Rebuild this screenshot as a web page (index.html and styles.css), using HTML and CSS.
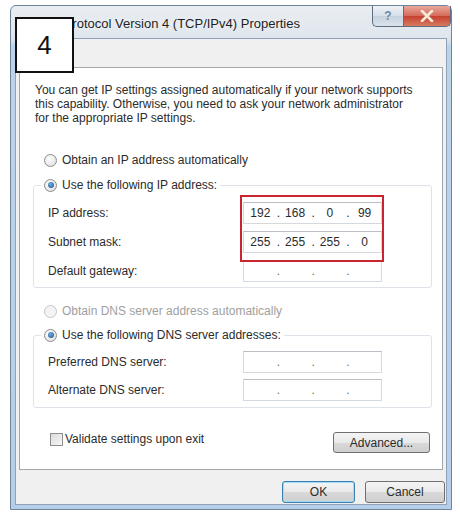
FILE: index.html
```html
<!DOCTYPE html>
<html lang="en">
<head>
    <meta charset="UTF-8">
    <meta name="viewport" content="width=device-width, initial-scale=1.0">
    <title>Internet Protocol Version 4 (TCP/IPv4) Properties</title>
    <link rel="stylesheet" href="styles.css">
</head>
<body>
    <div class="window">
        <div class="titlebar">
            <span class="title">Internet Protocol Version 4 (TCP/IPv4) Properties</span>
            <div class="caption-buttons">
                <span class="cap help">?</span>
                <span class="cap close">
                    <svg width="14" height="12" viewBox="0 0 14 12">
                        <path d="M2 1 L12 11 M12 1 L2 11" stroke="#f6ead8" stroke-width="2.6" stroke-linecap="round"/>
                    </svg>
                </span>
            </div>
        </div>

        <div class="client">
            <!-- the General tab sits under the step badge -->
            <div class="tabs"><span class="tab"></span></div>

            <div class="panel">
                <p class="intro">You can get IP settings assigned automatically if your network supports<br>this capability. Otherwise, you need to ask your network administrator<br>for the appropriate IP settings.</p>

                <div class="option">
                    <span class="radio"></span>
                    <span>Obtain an IP address automatically</span>
                </div>

                <div class="group">
                    <div class="legend">
                        <span class="radio checked"></span>
                        <span>Use the following IP address:</span>
                    </div>
                    <div class="row">
                        <span class="label">IP address:</span>
                        <div class="ipfield">
                            <span class="seg">192</span><span class="dot">.</span><span class="seg">168</span><span class="dot">.</span><span class="seg">0</span><span class="dot">.</span><span class="seg">99</span>
                        </div>
                    </div>
                    <div class="row">
                        <span class="label">Subnet mask:</span>
                        <div class="ipfield">
                            <span class="seg">255</span><span class="dot">.</span><span class="seg">255</span><span class="dot">.</span><span class="seg">255</span><span class="dot">.</span><span class="seg">0</span>
                        </div>
                    </div>
                    <div class="row">
                        <span class="label">Default gateway:</span>
                        <div class="ipfield empty">
                            <span class="seg"></span><span class="dot">.</span><span class="seg"></span><span class="dot">.</span><span class="seg"></span><span class="dot">.</span><span class="seg"></span>
                        </div>
                    </div>
                    <div class="highlight"></div>
                </div>

                <div class="option disabled">
                    <span class="radio"></span>
                    <span>Obtain DNS server address automatically</span>
                </div>

                <div class="group dns">
                    <div class="legend">
                        <span class="radio checked"></span>
                        <span>Use the following DNS server addresses:</span>
                    </div>
                    <div class="row">
                        <span class="label">Preferred DNS server:</span>
                        <div class="ipfield empty">
                            <span class="seg"></span><span class="dot">.</span><span class="seg"></span><span class="dot">.</span><span class="seg"></span><span class="dot">.</span><span class="seg"></span>
                        </div>
                    </div>
                    <div class="row">
                        <span class="label">Alternate DNS server:</span>
                        <div class="ipfield empty">
                            <span class="seg"></span><span class="dot">.</span><span class="seg"></span><span class="dot">.</span><span class="seg"></span><span class="dot">.</span><span class="seg"></span>
                        </div>
                    </div>
                </div>

                <div class="footer-row">
                    <div class="check-option">
                        <span class="checkbox"></span>
                        <span>Validate settings upon exit</span>
                    </div>
                    <button class="btn advanced">Advanced...</button>
                </div>
            </div>

            <div class="dialog-buttons">
                <button class="btn default">OK</button>
                <button class="btn cancel">Cancel</button>
            </div>
        </div>

        <div class="step">4</div>
    </div>
</body>
</html>
```

FILE: styles.css
```css
html, body {
    margin: 0;
    background: #ffffff;
}
body {
    width: 460px;
    height: 515px;
    overflow: hidden;
    font-family: 'Liberation Sans', Arial, sans-serif;
    font-size: 12px;
    color: #2b2b2b;
}
.window {
    position: relative;
    box-sizing: border-box;
    margin: 5px 0 0 10px;
    width: 442px;
    height: 505px;
    border: 1px solid #6f859c;
    border-radius: 6px 6px 0 0;
    background: linear-gradient(180deg, #e9edf1 0px, #dfe6ed 32px, #bcd3ea 40px, #b6cfe8 100%);
    padding: 0 4px 4px 4px;
}
.titlebar {
    display: flex;
    align-items: flex-start;
    height: 32px;
    margin: 0 -4px;
}
.title {
    padding: 10px 0 0 5px;
    font-size: 13px;
    color: #1f1f1f;
    text-shadow: 0 0 6px #ffffff;
}
.caption-buttons {
    display: flex;
    margin-left: auto;
}
.cap {
    display: flex;
    align-items: center;
    justify-content: center;
    box-sizing: border-box;
    height: 21px;
    border: 1px solid #5d6e80;
    border-top: none;
}
.help {
    width: 31px;
    border-right: none;
    border-radius: 0 0 0 5px;
    background: linear-gradient(180deg, #eef2f6, #d6dfe8 50%, #c5d2de 51%, #d9e3ec);
    color: #6f8aa6;
    font-size: 12px;
    font-weight: bold;
}
.close {
    width: 48px;
    border-radius: 0 0 5px 0;
    background: linear-gradient(180deg, #e9a89a, #d4695a 50%, #c5402f 51%, #d77b62);
}
.client {
    box-sizing: border-box;
    height: 467px;
    border: 1px solid #8ea3b8;
    background: #f0f0f0;
}
.tabs {
    height: 28px;
    padding-left: 3px;
    display: flex;
    align-items: flex-end;
}
.tab {
    box-sizing: border-box;
    width: 50px;
    height: 23px;
    border: 1px solid #898c95;
    border-bottom: none;
    background: #ffffff;
}
.panel {
    box-sizing: border-box;
    width: 424px;
    height: 403px;
    margin-left: 3px;
    border: 1px solid #a3a6ad;
    background: #ffffff;
}
.intro {
    margin: 15px 0 0 15px;
    line-height: 14px;
    white-space: nowrap;
}
.option {
    display: flex;
    align-items: center;
    height: 16px;
    margin: 27px 0 0 24px;
    gap: 5px;
}
.option.disabled {
    margin-top: 15px;
    color: #a0a0a0;
}
.radio {
    box-sizing: border-box;
    width: 13px;
    height: 13px;
    border-radius: 50%;
    border: 1px solid #8d8d8d;
    background: radial-gradient(circle at 40% 35%, #ffffff, #dadada);
    display: flex;
    align-items: center;
    justify-content: center;
}
.radio.checked::after {
    content: "";
    width: 6px;
    height: 6px;
    border-radius: 50%;
    background: radial-gradient(circle at 40% 35%, #6fb0e6, #1c4d7e);
}
.option.disabled .radio {
    border-color: #c6c6c6;
    background: #f4f4f4;
}
.group {
    position: relative;
    box-sizing: border-box;
    width: 399px;
    margin: 17px 0 0 13px;
    padding: 0 0 5px 14px;
    border: 1px solid #dde3e8;
    border-radius: 3px;
}
.group.dns {
    margin-top: 16px;
    padding-bottom: 6px;
}
.legend {
    display: flex;
    align-items: center;
    gap: 5px;
    width: fit-content;
    height: 16px;
    margin: -9px 0 0 -7px;
    padding: 0 3px;
    background: #ffffff;
}
.row {
    display: flex;
    align-items: center;
    margin-top: 7px;
}
.legend + .row {
    margin-top: 9px;
}
.dns .row {
    margin-top: 6px;
}
.dns .legend + .row {
    margin-top: 8px;
}
.label {
    width: 195px;
}
.ipfield {
    box-sizing: border-box;
    display: flex;
    align-items: center;
    width: 139px;
    height: 22px;
    border: 1px solid #d5d9de;
    border-top-color: #b9bec5;
    background: #ffffff;
}
.seg {
    width: 33px;
    text-align: center;
}
.dot {
    width: 2px;
    text-align: center;
}
.ipfield.empty .dot {
    color: #6d6d6d;
}
.highlight {
    position: absolute;
    left: 206px;
    top: 9px;
    box-sizing: border-box;
    width: 144px;
    height: 67px;
    border: 2px solid #c9252e;
}
.footer-row {
    display: flex;
    align-items: flex-start;
    justify-content: space-between;
    margin: 20px 12px 0 30px;
}
.check-option {
    display: flex;
    align-items: center;
    gap: 2px;
    height: 22px;
}
.checkbox {
    box-sizing: border-box;
    width: 13px;
    height: 13px;
    border: 1px solid #8f8f8f;
    background: linear-gradient(135deg, #dcdcdc, #f7f7f7);
}
.btn {
    box-sizing: border-box;
    height: 21px;
    padding: 0;
    font-family: inherit;
    font-size: 12px;
    color: #2b2b2b;
    border: 1px solid #707070;
    border-radius: 3px;
    background: linear-gradient(180deg, #f4f4f4, #e9e9e9 50%, #d9d9d9 51%, #cfcfcf);
}
.advanced {
    width: 97px;
    margin-top: 4px;
}
.dialog-buttons {
    display: flex;
    justify-content: flex-end;
    gap: 10px;
    margin-top: 11px;
    padding-right: 1px;
}
.dialog-buttons .btn {
    height: 22px;
}
.default {
    width: 73px;
    border-color: #3c7fb1;
    box-shadow: inset 0 0 0 1px #9ddcf6;
}
.cancel {
    width: 80px;
}
.step {
    position: absolute;
    left: 4px;
    top: 11px;
    box-sizing: border-box;
    width: 59px;
    height: 56px;
    border: 2px solid #111111;
    background: #ffffff;
    font-size: 26px;
    color: #111111;
    display: flex;
    align-items: center;
    justify-content: center;
}
```
